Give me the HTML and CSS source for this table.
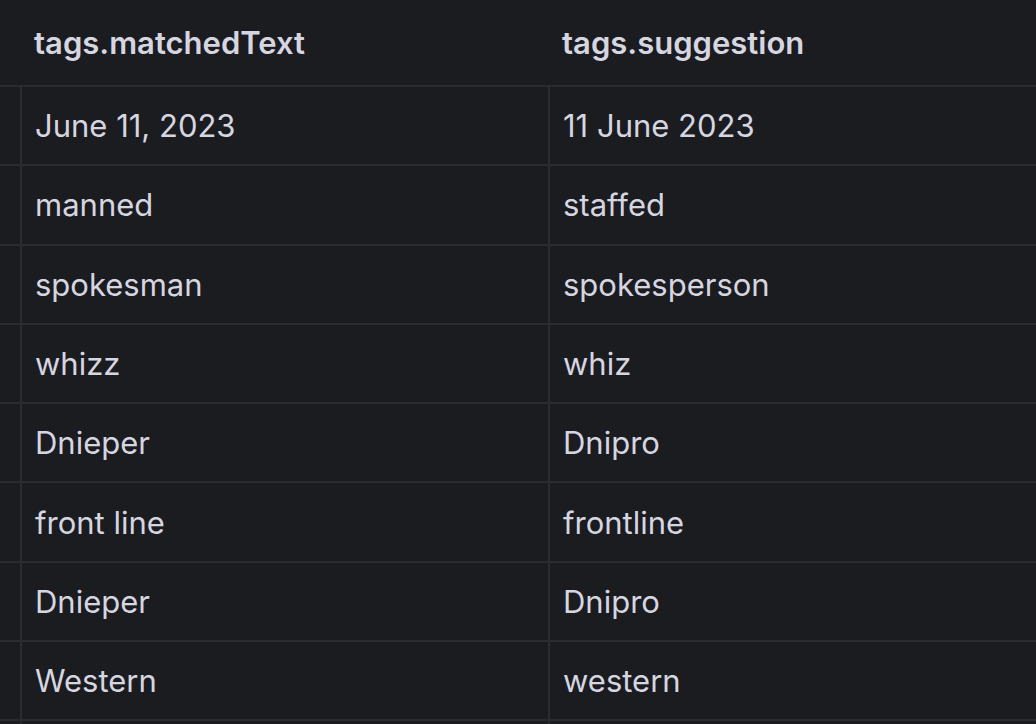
FILE: index.html
```html
<!DOCTYPE html>
<html>
    <head>
        <link rel="stylesheet" href="styles.css">
    </head>
    <body>

        <table class="results">
            <thead>
                <tr>
                    <th class="gutter"></th>
                    <th class="matched">tags.matchedText</th>
                    <th class="suggestion">tags.suggestion</th>
                </tr>
            </thead>
            <tbody>
                <tr><td class="gutter"></td><td>June 11, 2023</td><td>11 June 2023</td></tr>
                <tr><td class="gutter"></td><td>manned</td><td>staffed</td></tr>
                <tr><td class="gutter"></td><td>spokesman</td><td>spokesperson</td></tr>
                <tr><td class="gutter"></td><td>whizz</td><td>whiz</td></tr>
                <tr><td class="gutter"></td><td>Dnieper</td><td>Dnipro</td></tr>
                <tr><td class="gutter"></td><td>front line</td><td>frontline</td></tr>
                <tr><td class="gutter"></td><td>Dnieper</td><td>Dnipro</td></tr>
                <tr><td class="gutter"></td><td>Western</td><td>western</td></tr>
                <tr><td class="gutter"></td><td>&nbsp;</td><td>&nbsp;</td></tr>
            </tbody>
        </table>

    </body>
</html>
```

FILE: styles.css
```css
* { margin: 0; padding: 0; box-sizing: border-box; font-family: Inter, "Noto Sans", sans-serif; color: #d6d6e1; }
html, body { width: 100%; height: 100%; background: #1b1c20; overflow: hidden; }

.results { border-collapse: collapse; table-layout: fixed; width: 100%; }
.results th, .results td { text-align: left; padding: 0 0 0 13px; font-size: 31px; white-space: nowrap; overflow: hidden; }

.results th { height: 86px; font-weight: 600; border-bottom: 2px solid #2b2c32; }
.results td { height: 79.3px; border-bottom: 2px solid #2b2c32; border-right: 2px solid #2b2c32; }

.results .gutter { width: 21px; padding: 0; }
.results .matched { width: 528px; }
.results td:last-child { border-right: none; }
```
